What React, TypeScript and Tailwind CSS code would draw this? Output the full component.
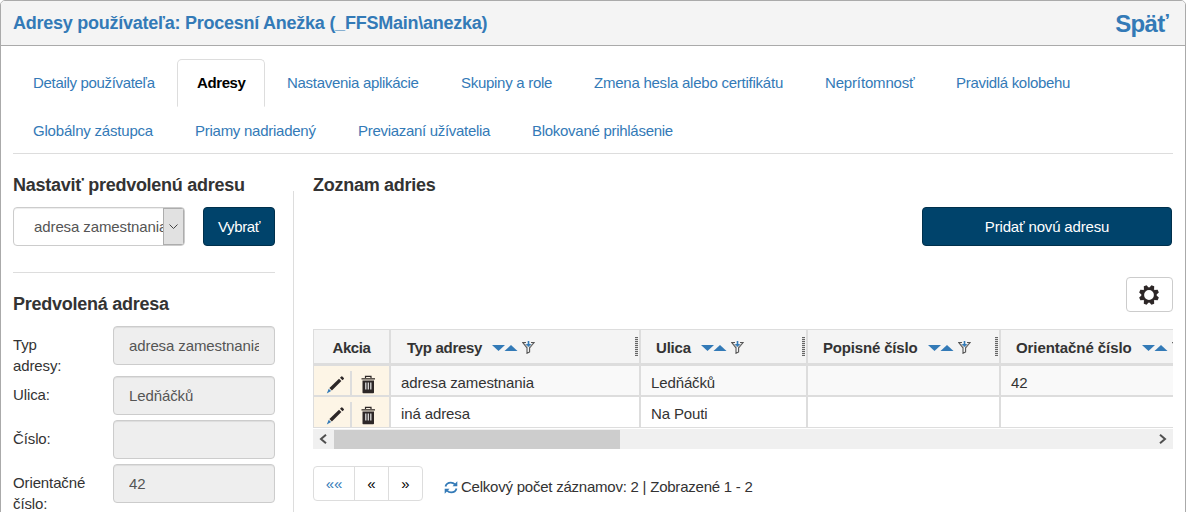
import React from "react";
import clsx from "clsx";

interface Tab {
  label: string;
  className: string;
  active?: boolean;
}

interface Column {
  label: string;
  width: string;
  head: string;
}

const tabs: Tab[] = [
  { label: "Detaily používateľa", className: "w-[162px] tracking-[-0.32px]" },
  { label: "Adresy", className: "w-[88px] tracking-[-0.4px]", active: true },
  { label: "Nastavenia aplikácie", className: "w-[172px] tracking-[-0.3px]" },
  { label: "Skupiny a role", className: "w-[131px] tracking-[-0.28px]" },
  { label: "Zmena hesla alebo certifikátu", className: "w-[229px] tracking-[-0.24px]" },
  { label: "Neprítomnosť", className: "w-[129px] tracking-[-0.16px]" },
  { label: "Pravidlá kolobehu", className: "w-[154px] tracking-[-0.3px]" },
  { label: "Globálny zástupca", className: "w-[160px] tracking-[-0.2px]" },
  { label: "Priamy nadriadený", className: "w-[161px] tracking-[-0.26px]" },
  { label: "Previazaní užívatelia", className: "w-[172px] tracking-[-0.3px]" },
  { label: "Blokované prihlásenie", className: "w-[182px] tracking-[-0.28px]" },
];

const columns: Column[] = [
  { label: "Typ adresy", width: "w-[250px]", head: "w-[85px] tracking-[-0.3px]" },
  { label: "Ulica", width: "w-[167px]", head: "w-[45px] tracking-[-0.2px]" },
  { label: "Popisné číslo", width: "w-[193px]", head: "w-[105px] tracking-[-0.17px]" },
  { label: "Orientačné číslo", width: "w-[230px]", head: "w-[126px] tracking-[-0.07px]" },
];

const rows = [
  ["adresa zamestnania", "Ledňáčků", "", "42"],
  ["iná adresa", "Na Pouti", "", ""],
];

const fields = [
  { label: "Typ adresy:", value: "adresa zamestnania", height: "h-[50px]" },
  { label: "Ulica:", value: "Ledňáčků", height: "h-[44px]" },
  { label: "Číslo:", value: "", height: "h-[44px]" },
  { label: "Orientačné číslo:", value: "42", height: "h-[50px]" },
];

function SortArrows() {
  return (
    <svg width="26" height="8" viewBox="0 0 26 8" fill="#337ab7" className="shrink-0">
      <path d="M0 1h13L6.500 7z" />
      <path d="M12.500 7h13L19 1z" />
    </svg>
  );
}

function FilterIcon() {
  return (
    <svg width="13" height="13" viewBox="0 0 13 13" fill="none" className="shrink-0">
      <path d="M4 1.500H.8L5 6.800v5.500l2.600-1.300V6.800L12 1.500H9" stroke="#555" strokeWidth="1.100" />
      <path d="M2.500 2.500L5.500 6M10.500 2.500L7.500 6" stroke="#aaa" />
      <path d="M6.500 0v4" stroke="#337ab7" strokeWidth="1.600" />
      <path d="M3.800 3h5.400L6.500 6z" fill="#337ab7" />
    </svg>
  );
}

function PencilIcon() {
  return (
    <svg width="19" height="19" viewBox="0 0 19 19" className="shrink-0">
      <path d="M3.400 12.900L13 3.700l2.400 2.400-9.500 9.300z" fill="#2d2727" />
      <path d="M14 2.700l1.300-1.200q.5-.4 1 0l1.500 1.500q.4.500 0 1L16.500 5.200z" fill="#2d2727" />
      <path d="M2.700 13.700l2.400 2.400L.8 18.600z" fill="#337ab7" />
    </svg>
  );
}

function TrashIcon() {
  return (
    <svg width="15" height="19" viewBox="0 0 15 19" className="shrink-0">
      <path d="M4.500 3V1.300h5.500V3" fill="none" stroke="#2d2727" strokeWidth="1.200" />
      <path d="M.5 3h13.500v1.600H.5z" fill="#5c554e" />
      <path d="M1.500 5.500h11.500v12q0 .8-.8.800H2.300q-.8 0-.8-.8z" fill="#2d2727" />
      <path d="M4.800 7.500v7M7.300 7.500v7M9.800 7.500v7" stroke="#ddd" strokeWidth="1.300" />
    </svg>
  );
}

function GearIcon() {
  return (
    <svg width="20" height="20" viewBox="-10 -10 20 20" className="mr-[2px]">
      <circle r="6.200" fill="none" stroke="#2d2727" strokeWidth="2.600" />
      {[22.5, 67.5, 112.5, 157.5, 202.5, 247.5, 292.5, 337.5].map((angle) => (
        <path key={angle} d="M-2.700-6.500L-1.500-10h3L2.700-6.500z" fill="#2d2727" transform={`rotate(${angle})`} />
      ))}
    </svg>
  );
}

function RefreshIcon() {
  return (
    <svg width="14" height="13" viewBox="0 0 14 13" fill="none" stroke="#337ab7" strokeWidth="1.800" className="shrink-0">
      <path d="M1.500 5.500C2.200 3 4.300 1.600 6.800 1.600c1.800 0 3 .6 4.200 1.800" />
      <path d="M12.500 7.500c-.7 2.500-2.800 3.900-5.300 3.900-1.800 0-3-.6-4.200-1.800" />
      <path d="M13.300.3v5H8.500z" fill="#337ab7" stroke="none" />
      <path d="M.7 12.700v-5h4.800z" fill="#337ab7" stroke="none" />
    </svg>
  );
}

function Sidebar() {
  return (
    <aside className="w-[262px] shrink-0 pt-[20px]">
      <h2 className="h-[23px] text-[18px] leading-[23px] font-bold tracking-[-0.27px] whitespace-nowrap">Nastaviť predvolenú adresu</h2>
      <div className="mt-[10px] flex justify-between">
        <div className="flex h-[39px] w-[172px] overflow-hidden rounded-[4px] border border-[#ccc] bg-white shadow-[inset_0_1px_1px_rgba(0,0,0,0.075)]">
          <div className="min-w-0 flex-1 overflow-hidden pl-[20px] leading-[37px] tracking-[-0.1px] whitespace-nowrap text-[#555]">
            adresa zamestnania
          </div>
          <div className="flex w-[21px] shrink-0 items-center justify-center border border-[#adadad] bg-[#e1e1e1]">
            <svg width="9" height="6" viewBox="0 0 9 6" fill="none" stroke="#444">
              <path d="M.5.500l4 4 4-4" />
            </svg>
          </div>
        </div>
        <button className="h-[39px] w-[72px] rounded-[4px] border border-[#00304c] bg-[#00436b] pt-[2px] tracking-[-0.4px] text-white">
          Vybrať
        </button>
      </div>
      <hr className="mt-[26px] border-[#ddd]" />
      <h2 className="mt-[20px] h-[23px] text-[18px] leading-[23px] font-bold tracking-[-0.25px]">Predvolená adresa</h2>
      <div className="mt-[10px]">
        {fields.map((field) => (
          <div key={field.label} className={clsx("flex", field.height)}>
            <div className="w-[100px] shrink-0 pt-[8px] pr-[15px] leading-[21px] tracking-[-0.12px]">
              <div className={field.label.startsWith("Typ") ? "w-[55px]" : "w-[80px]"}>{field.label}</div>
            </div>
            <div className="h-[39px] w-[162px] rounded-[4px] border border-[#ccc] bg-[#eee] px-[15px] shadow-[inset_0_1px_1px_rgba(0,0,0,0.075)]">
              <div className="h-[37px] overflow-hidden leading-[37px] tracking-[-0.1px] whitespace-nowrap text-[#555]">{field.value}</div>
            </div>
          </div>
        ))}
      </div>
    </aside>
  );
}

function AddressTable() {
  return (
    <div className="w-[860px] overflow-hidden">
      <div className="w-[919px] border border-[#ddd]">
        <div className="flex h-[36px] border-b-[3px] border-[#ddd] bg-[#f4f4f4] font-bold">
          <div className="w-[77px] shrink-0 border-r-2 border-[#ddd] text-center leading-[36px] tracking-[-0.4px]">Akcia</div>
          {columns.map((column, index) => (
            <div
              key={column.label}
              className={clsx(
                "flex shrink-0 items-center border-r-2 border-[#ddd] pt-[2px]",
                index === 0 ? "pl-[16px]" : "pl-[15px]",
                column.width
              )}
            >
              <span className={clsx("pt-[1px] whitespace-nowrap", column.head)}>{column.label}</span>
              <span className="flex items-center gap-[4px]">
                <SortArrows />
                <FilterIcon />
              </span>
              <span className="mr-[1px] mb-[2px] ml-auto h-[19px] w-[3px] bg-[repeating-linear-gradient(#666_0_1px,#ddd_1px_2px)]" />
            </div>
          ))}
        </div>
        {rows.map((row, index) => (
          <div
            key={row[0]}
            className={clsx("flex border-[#ddd]", index === 0 ? "h-[31px] border-b-2 bg-[#f9f9f9]" : "h-[30px] bg-white")}
          >
            <div className="flex w-[77px] shrink-0 border-r-2 border-[#ddd] bg-[#fdf5e6] pt-[5px]">
              <div className="w-[38px] border-r-2 border-[#ddd] pt-[4px] pl-[12px]">
                <PencilIcon />
              </div>
              <div className="pt-[4px] pl-[9px]">
                <TrashIcon />
              </div>
            </div>
            {row.map((value, i) => (
              <div key={i} className={clsx("shrink-0 border-r-2 border-[#ddd] pl-[10px] leading-[34px] tracking-[-0.12px]", columns[i].width)}>
                {value}
              </div>
            ))}
          </div>
        ))}
      </div>
      {/* Horizontal scrollbar */}
      <div className="mt-[1px] flex h-[20px] items-center justify-between bg-[#f0f0f0]">
        <div className="flex h-full items-center">
          <div className="flex w-[21px] justify-center pr-[2px]">
            <svg width="8" height="10" viewBox="0 0 8 10" fill="none" stroke="#505050" strokeWidth="2">
              <path d="M7 .8L2 5l5 4.200" />
            </svg>
          </div>
          <div className="h-[19px] w-[286px] bg-[#cdcdcd]" />
        </div>
        <div className="flex w-[21px] justify-center">
          <svg width="8" height="10" viewBox="0 0 8 10" fill="none" stroke="#505050" strokeWidth="2">
            <path d="M1 .8L6 5 1 9.200" />
          </svg>
        </div>
      </div>
    </div>
  );
}

export default function App() {
  return (
    <div className="h-[512px] w-[1186px] overflow-hidden bg-white font-['Liberation_Sans',Arial,sans-serif] text-[15px] text-[#333]">
      <div className="h-[530px] rounded-t-[5px] border border-[#aaa]">
        <header className="flex h-[45px] items-center justify-between rounded-t-[4px] border-b border-[#aaa] bg-[#f4f4f4] pr-[17px] pl-[12px] font-bold text-[#337ab7]">
          <h1 className="text-[18px] tracking-[-0.25px]">Adresy používateľa: Procesní Anežka (_FFSMain\anezka)</h1>
          <a className="pt-[2px] text-[24px] tracking-[-0.7px]">Späť</a>
        </header>

        <div className="px-[12px] pt-[13px]">
          <nav className="flex h-[95px] flex-wrap content-start gap-x-[2px] border-b border-[#ddd]">
            {tabs.map((tab) => (
              <a
                key={tab.label}
                className={clsx(
                  "h-[48px] border px-[19px] leading-[46px] whitespace-nowrap",
                  tab.className,
                  tab.active ? "rounded-t-[5px] border-[#ddd] border-b-transparent font-bold text-black" : "border-transparent text-[#337ab7]"
                )}
              >
                {tab.label}
              </a>
            ))}
          </nav>

          <div className="flex">
            <Sidebar />
            <div className="mt-[37px] ml-[18px] h-[340px] border-l border-[#ddd]" />
            <main className="ml-[19px] w-[860px] pt-[20px]">
              <h2 className="h-[23px] text-[18px] leading-[23px] font-bold tracking-[-0.27px]">Zoznam adries</h2>
              <div className="mt-[10px] flex justify-end pr-[1px]">
                <button className="h-[39px] w-[250px] rounded-[4px] border border-[#00304c] bg-[#00436b] pt-[2px] tracking-[-0.17px] text-white">
                  Pridať novú adresu
                </button>
              </div>
              <div className="mt-[31px] mb-[17px] flex justify-end">
                <button className="flex h-[35px] w-[47px] items-center justify-center rounded-[4px] border border-[#ccc] bg-white">
                  <GearIcon />
                </button>
              </div>
              <AddressTable />
              <div className="mt-[17px] flex">
                <div className="flex h-[35px] w-[110px] rounded-[4px] border border-[#ddd] text-center leading-[34px]">
                  <a className="w-[41px] border-r border-[#ddd] text-[#337ab7]">««</a>
                  <a className="w-[34px] border-r border-[#ddd] text-black">«</a>
                  <a className="w-[33px] text-black">»</a>
                </div>
                <div className="ml-[21px] flex items-center pt-[7px]">
                  <RefreshIcon />
                  <span className="ml-[3px] tracking-[-0.23px] whitespace-nowrap">Celkový počet záznamov: 2 | Zobrazené 1 - 2</span>
                </div>
              </div>
            </main>
          </div>
        </div>
      </div>
    </div>
  );
}
